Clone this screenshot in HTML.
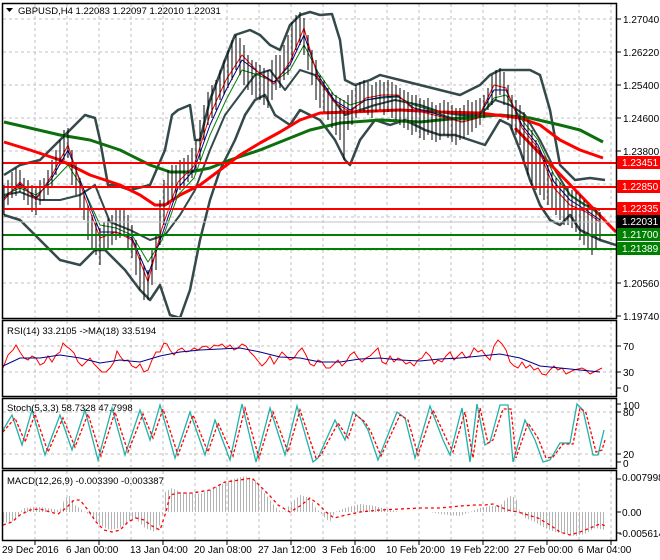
<!DOCTYPE html>
<html><head><meta charset="utf-8"><style>
html,body{margin:0;padding:0;background:#fff;width:660px;height:560px;overflow:hidden}
svg{display:block;font-family:"Liberation Sans",sans-serif}
</style></head><body>
<svg width="660" height="560" viewBox="0 0 660 560" xmlns="http://www.w3.org/2000/svg">
<defs>
<pattern id="hb" width="3" height="10" patternUnits="userSpaceOnUse"><rect x="0" y="0" width="1" height="10" fill="#b4b4b4"/></pattern>
<clipPath id="cm"><rect x="3" y="4" width="613" height="313"/></clipPath>
</defs>
<rect width="660" height="560" fill="#fff"/>
<g stroke="#c0c0c0" stroke-dasharray="3,3" stroke-width="1">
<path d="M35 4V317M67 4V317M99 4V317M131 4V317M163 4V317M195 4V317M227 4V317M259 4V317M291 4V317M323 4V317M355 4V317M387 4V317M419 4V317M451 4V317M483 4V317M515 4V317M547 4V317M579 4V317M611 4V317"/>
<path d="M35 321V395M67 321V395M99 321V395M131 321V395M163 321V395M195 321V395M227 321V395M259 321V395M291 321V395M323 321V395M355 321V395M387 321V395M419 321V395M451 321V395M483 321V395M515 321V395M547 321V395M579 321V395M611 321V395"/>
<path d="M35 399V467M67 399V467M99 399V467M131 399V467M163 399V467M195 399V467M227 399V467M259 399V467M291 399V467M323 399V467M355 399V467M387 399V467M419 399V467M451 399V467M483 399V467M515 399V467M547 399V467M579 399V467M611 399V467"/>
<path d="M35 471V540M67 471V540M99 471V540M131 471V540M163 471V540M195 471V540M227 471V540M259 471V540M291 471V540M323 471V540M355 471V540M387 471V540M419 471V540M451 471V540M483 471V540M515 471V540M547 471V540M579 471V540M611 471V540"/>
<path d="M3 19H616M3 52H616M3 85H616M3 118H616M3 151H616M3 184H616M3 217H616M3 250H616M3 283H616"/>
<path d="M3 346H616M3 372H616M3 412H616M3 454H616"/>
</g>
<g clip-path="url(#cm)" fill="none" stroke-linejoin="round">
<polyline stroke="#34494a" stroke-width="2.5" points="4,175 20,165 40,160 60,140 75,125 85,115 95,118 100,140 108,185 115,185 130,190 150,185 165,150 172,115 178,110 190,105 195,140 200,140 210,100 225,60 235,35 250,30 260,35 270,45 280,50 290,25 300,15 310,12 320,15 332,14 340,40 345,80 355,85 370,80 380,75 400,80 420,85 440,90 460,95 480,85 490,75 500,70 515,70 530,70 540,75 550,110 560,165 575,180 590,178 605,180"/>
<polyline stroke="#34494a" stroke-width="2.5" points="4,215 20,220 40,240 60,260 80,265 95,250 105,250 115,260 125,270 140,290 150,300 160,285 170,315 180,318 190,290 200,240 210,200 220,170 235,140 245,115 255,100 265,95 275,115 290,125 300,110 310,115 320,120 335,140 345,160 350,165 360,140 375,120 390,125 405,120 425,130 440,135 455,135 470,140 485,145 500,120 510,125 520,150 530,180 540,205 550,220 560,225 570,215 580,230 590,235 600,240 616,245"/>
<polyline stroke="#34494a" stroke-width="2" points="4,195 20,192 40,200 60,200 80,195 95,185 110,222 130,230 150,240 165,235 180,215 195,190 210,150 225,115 240,95 255,75 270,70 285,90 300,70 315,75 330,95 345,115 360,110 375,105 395,100 420,105 440,112 460,115 480,115 495,100 510,105 525,115 540,140 555,170 570,195 585,205 600,210"/>
<polyline stroke="#0d6e0d" stroke-width="3" points="4,122 30,128 60,135 90,140 120,150 150,165 170,172 190,172 210,168 230,160 260,150 290,138 310,130 340,123 380,120 420,122 460,118 500,115 530,118 560,125 580,130 603,142"/>
<polyline stroke="#ff0000" stroke-width="3" points="4,142 30,150 60,160 90,175 120,185 140,195 155,205 165,205 180,195 200,185 220,170 240,155 260,143 280,132 300,120 320,113 350,112 400,110 440,112 480,113 520,118 540,125 560,140 580,150 603,158"/>
<line x1="515" y1="128" x2="616" y2="232" stroke="#ff0000" stroke-width="3"/>
<polyline stroke="#008000" stroke-width="1" points="4,195 20,188 36,195 52,182 68,165 84,190 100,225 116,228 132,235 148,262 162,240 178,195 194,178 210,135 226,100 242,70 258,75 274,82 290,70 304,45 318,72 334,95 350,105 366,100 382,98 398,97 414,105 430,110 446,116 462,120 478,118 494,98 506,95 522,120 538,140 554,175 570,195 586,205 600,215"/>
<polyline stroke="#00008b" stroke-width="1" points="4,198 20,184 36,198 52,178 68,150 84,190 100,232 116,232 132,238 148,275 162,235 178,188 194,170 210,125 226,90 242,60 258,72 274,82 290,65 304,35 318,75 334,100 350,110 366,100 382,97 398,96 414,108 430,112 446,117 462,122 478,118 494,90 506,90 522,125 538,145 554,182 570,200 586,210 600,220"/>
<polyline stroke="#ff0000" stroke-width="1" points="4,200 20,182 36,200 52,175 68,145 84,195 100,238 116,232 132,240 148,282 162,228 178,182 194,166 210,115 226,80 242,55 258,72 274,84 290,62 304,28 318,78 334,102 350,112 366,98 382,95 398,95 414,110 430,114 446,118 462,122 478,118 494,85 506,88 522,128 538,148 554,188 570,205 586,212 600,222"/>
<path stroke="#000" stroke-width="1" d="M4 185V215M8 180V205M12 172V198M16 168V196M20 170V192M24 178V200M28 180V205M32 185V212M36 188V215M40 180V205M44 178V200M48 170V195M52 160V188M56 150V175M60 140V165M64 130V160M68 128V158M72 150V185M76 162V195M80 178V210M84 190V220M88 205V240M92 215V250M96 222V255M100 228V265M104 222V250M108 218V248M112 215V245M116 210V240M120 210V238M124 208V235M128 215V248M132 225V258M136 240V275M140 255V290M144 265V300M148 270V300M152 250V285M156 235V270M160 200V245M164 180V225M168 170V205M172 165V200M176 165V195M180 160V190M184 158V188M188 155V182M192 148V178M196 140V170M200 120V160M204 105V140M208 92V125M212 85V118M216 80V110M220 70V100M224 60V95M228 50V88M232 40V80M236 35V70M240 38V75M244 45V85M248 55V90M252 60V95M256 62V98M260 65V100M264 68V105M268 70V108M272 60V100M276 55V90M280 55V88M284 45V80M288 35V75M292 22V60M296 15V50M300 12V45M304 18V55M308 35V70M312 50V85M316 60V100M320 75V108M324 80V112M328 88V120M332 92V128M336 95V135M340 98V140M344 100V160M348 95V130M352 90V125M356 85V118M360 82V112M364 80V112M368 82V115M372 85V118M376 82V112M380 80V110M384 82V115M388 80V112M392 82V118M396 85V120M400 88V125M404 90V128M408 92V130M412 95V135M416 95V132M420 98V138M424 100V140M428 98V135M432 102V140M436 105V142M440 103V140M444 100V135M448 102V138M452 105V142M456 108V145M460 108V140M464 105V138M468 100V135M472 102V132M476 100V128M480 98V125M484 95V118M488 88V110M492 75V105M496 70V100M500 68V95M504 72V105M508 85V120M512 95V130M516 100V135M520 105V145M524 112V160M528 120V175M532 130V185M536 140V190M540 150V195M544 160V200M548 165V205M552 172V210M556 178V215M560 182V220M564 185V225M568 188V225M572 190V228M576 192V232M580 195V240M584 200V245M588 205V250M592 208V255M596 210V250M600 212V240"/>
</g>
<g stroke-width="2">
<line x1="3" y1="163" x2="616" y2="163" stroke="#ff0000"/>
<line x1="3" y1="187" x2="616" y2="187" stroke="#ff0000"/>
<line x1="3" y1="209" x2="616" y2="209" stroke="#ff0000"/>
<line x1="3" y1="235" x2="616" y2="235" stroke="#008000"/>
<line x1="3" y1="249" x2="616" y2="249" stroke="#008000"/>
</g>
<line x1="3" y1="222" x2="616" y2="222" stroke="#c0c0c0" stroke-width="1"/>
<polyline fill="none" stroke="#ff0000" stroke-width="1" points="3,368 8,355 13,350 16,345 20,352 24,358 28,360 32,356 36,358 40,365 44,363 48,356 52,362 56,355 60,352 63,343 66,346 70,349 74,353 78,362 82,366 86,362 90,358 94,364 98,368 102,372 106,372 110,368 114,362 117,351 120,356 124,361 128,360 132,366 136,368 140,364 144,372 148,370 152,360 156,352 160,352 164,343 167,344 170,350 174,355 178,350 182,348 186,352 190,351 194,348 198,350 202,347 206,346 210,349 214,345 218,346 222,344 226,348 230,345 234,350 238,348 242,344 246,346 250,352 254,356 258,361 262,366 266,362 270,356 274,364 278,358 282,352 286,356 290,360 294,358 298,352 302,348 306,355 310,364 314,366 318,360 322,362 326,368 330,368 334,364 338,360 342,366 346,362 350,355 354,352 358,358 362,362 366,358 370,356 374,352 378,348 382,362 386,364 390,356 394,362 398,358 402,360 406,364 410,362 414,366 418,360 422,358 426,352 430,356 434,364 438,360 442,362 446,356 450,352 454,360 458,356 462,352 466,358 470,356 474,348 478,352 482,350 486,356 490,360 494,346 498,340 502,344 506,350 510,362 514,366 518,368 522,362 526,368 530,365 534,370 538,368 542,374 546,375 550,370 554,366 558,370 562,368 566,374 570,372 574,370 578,369 582,368 586,370 590,374 594,372 598,370 602,368"/>
<polyline fill="none" stroke="#00008b" stroke-width="1" points="3,366 20,358 40,358 60,355 80,358 100,363 120,360 140,362 160,356 180,352 200,350 220,349 240,348 260,352 280,357 300,358 320,362 340,362 360,359 380,358 400,360 420,361 440,359 460,358 480,356 500,354 520,358 540,366 560,368 580,370 600,372"/>
<polyline fill="none" stroke="#20b2aa" stroke-width="1.3" points="3,430 12,415 22,445 32,410 45,455 60,415 72,450 85,410 98,460 112,408 125,455 140,410 150,440 160,405 175,458 190,412 205,455 215,420 230,460 242,404 256,462 270,408 285,455 297,406 313,462 318,458 335,420 345,440 353,412 362,420 368,430 378,460 397,412 405,418 415,458 430,406 443,440 450,455 462,408 470,462 477,404 485,445 490,442 500,405 508,405 513,462 525,420 535,440 543,462 550,460 560,443 570,443 577,404 583,410 593,455 598,455 604,430"/>
<polyline fill="none" stroke="#ff0000" stroke-width="1.3" stroke-dasharray="3,2" points="3,432 15,418 25,442 35,414 48,452 63,418 75,447 88,414 101,456 115,412 128,452 143,414 153,438 163,409 178,455 193,415 208,452 218,423 233,456 245,408 259,458 273,412 288,452 300,410 316,458 321,455 338,423 348,438 356,415 365,422 371,432 381,456 400,415 408,420 418,455 433,410 446,438 453,452 465,412 473,458 480,408 488,443 493,440 503,409 511,409 516,458 528,423 538,438 546,458 553,457 563,444 573,444 580,408 586,413 596,452 602,450 605,440"/>
<polygon fill="url(#hb)" points="3,512 3,522 10,523 20,515 20,512 24,508 40,507 60,510 65,498 70,496 75,505 85,512 90,515 100,525 110,530 120,528 128,522 135,518 145,528 155,532 160,525 163,512 165,492 172,488 180,492 200,494 215,488 230,480 245,476 255,480 262,490 270,500 278,510 285,512 290,504 300,495 310,498 316,508 320,512 325,518 330,522 335,512 345,508 360,504 375,506 390,510 400,512 420,512 430,512 440,514 460,516 470,512 480,508 490,506 500,506 505,500 510,496 516,498 520,512 525,518 535,522 545,528 555,532 565,534 575,536 585,534 595,528 605,530 605,512"/>
<polyline fill="none" stroke="#ff0000" stroke-width="1.3" stroke-dasharray="3,3" points="3,525 12,522 20,515 30,510 40,509 50,512 58,514 66,508 74,500 80,500 88,510 96,522 104,530 112,532 120,530 128,522 136,518 144,520 152,526 160,530 166,512 170,495 178,493 192,493 210,490 225,482 240,480 252,478 262,488 270,496 278,505 290,512 300,506 310,498 318,504 326,512 334,518 346,515 360,512 380,510 400,509 420,508 440,508 460,506 475,505 485,505 493,504 500,507 508,510 518,512 528,515 538,518 550,525 560,532 570,535 580,532 590,528 600,524 606,526"/>
<g fill="none" stroke="#000" stroke-width="1.5">
<rect x="2.5" y="3.5" width="614" height="315"/>
<rect x="2.5" y="320.5" width="614" height="76"/>
<rect x="2.5" y="398.5" width="614" height="70"/>
<rect x="2.5" y="470.5" width="614" height="70"/>
</g>
<path stroke="#000" d="M617 19h4M617 52h4M617 85h4M617 118h4M617 151h4M617 283h4M617 316h4M617 346h4M617 372h4M617 388h4M617 404h4M617 412h4M617 454h4M617 462h4M617 479h4M617 512h4M617 533h4M35 541v4M99 541v4M163 541v4M227 541v4M291 541v4M355 541v4M419 541v4M483 541v4M547 541v4M611 541v4"/>
<g font-size="10" fill="#000">
<text x="623" y="23">1.27040</text>
<text x="623" y="56">1.26220</text>
<text x="623" y="89">1.25400</text>
<text x="623" y="122">1.24600</text>
<text x="623" y="155">1.23800</text>
<text x="623" y="287">1.20560</text>
<text x="623" y="320">1.19740</text>
<text x="623" y="350">70</text>
<text x="623" y="376">30</text>
<text x="623" y="392">0</text>
<text x="623" y="409">100</text>
<text x="623" y="416">80</text>
<text x="623" y="458">20</text>
<text x="623" y="467">0</text>
<text x="622" y="481">0.007998</text>
<text x="622" y="516">0.00</text>
<text x="619" y="537">-0.005614</text>
</g>
<g font-size="10" fill="#fff">
<rect x="617" y="156" width="43" height="13" fill="#ff0000"/><text x="622" y="166">1.23451</text>
<rect x="617" y="180" width="43" height="13" fill="#ff0000"/><text x="622" y="190">1.22850</text>
<rect x="617" y="202" width="43" height="13" fill="#ff0000"/><text x="622" y="212">1.22335</text>
<rect x="617" y="215" width="43" height="13" fill="#000"/><text x="622" y="225">1.22031</text>
<rect x="617" y="228" width="43" height="13" fill="#008000"/><text x="622" y="238">1.21700</text>
<rect x="617" y="242" width="43" height="13" fill="#008000"/><text x="622" y="252">1.21389</text>
</g>
<g font-size="9.5" fill="#000">
<path d="M6 8h7l-3.5 4z" fill="#000"/>
<text x="18" y="14">GBPUSD,H4  1.22083 1.22097 1.22010 1.22031</text>
<text x="7" y="334">RSI(14) 33.2105  -&gt;MA(18) 33.5194</text>
<text x="7" y="411">Stoch(5,3,3) 58.7328 47.7998</text>
<text x="7" y="484">MACD(12,26,9) -0.003390 -0.003387</text>
</g>
<g font-size="10" fill="#000">
<text x="2" y="553">29 Dec 2016</text>
<text x="66" y="553">6 Jan 00:00</text>
<text x="130" y="553">13 Jan 04:00</text>
<text x="194" y="553">20 Jan 08:00</text>
<text x="258" y="553">27 Jan 12:00</text>
<text x="322" y="553">3 Feb 16:00</text>
<text x="386" y="553">10 Feb 20:00</text>
<text x="450" y="553">19 Feb 22:00</text>
<text x="514" y="553">27 Feb 00:00</text>
<text x="578" y="553">6 Mar 04:00</text>
</g>
</svg>
</body></html>
